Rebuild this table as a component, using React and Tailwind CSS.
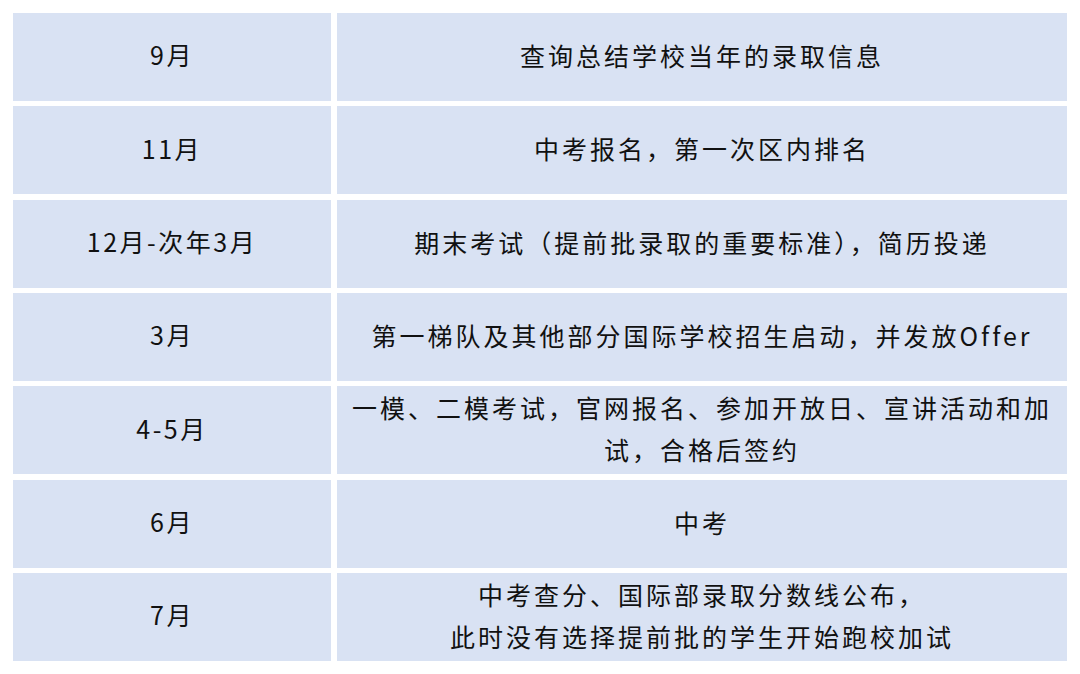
import React from 'react';

const rows = [
  { month: '9月', lines: ['查询总结学校当年的录取信息'] },
  { month: '11月', lines: ['中考报名，第一次区内排名'] },
  { month: '12月-次年3月', lines: ['期末考试（提前批录取的重要标准），简历投递'] },
  { month: '3月', lines: ['第一梯队及其他部分国际学校招生启动，并发放Offer'] },
  { month: '4-5月', lines: ['一模、二模考试，官网报名、参加开放日、宣讲活动和加', '试，合格后签约'] },
  { month: '6月', lines: ['中考'] },
  { month: '7月', lines: ['中考查分、国际部录取分数线公布，', '此时没有选择提前批的学生开始跑校加试'] },
];

export default function App() {
  return (
    <div
      className="w-[1080px] h-[674px] bg-white pt-[13px] pl-[13px] text-[#111]"
      style={{ fontFamily: '"Noto Sans CJK SC", "Noto Sans", sans-serif' }}
    >
      <div className="grid grid-cols-[318px_730px] gap-x-[6px] gap-y-[5.33px]">
        {rows.map(row => (
          <React.Fragment key={row.month}>
            <div className="h-[88px] pb-[4px] bg-[#d9e2f3] flex items-center justify-center text-[25px] tracking-[2.5px]">
              {row.month}
            </div>
            <div className="h-[88px] pb-[4px] bg-[#d9e2f3] flex flex-col items-center justify-center text-[25px] tracking-[3px] leading-[42px]">
              {row.lines.map(line => (
                <span key={line} className="whitespace-nowrap">{line}</span>
              ))}
            </div>
          </React.Fragment>
        ))}
      </div>
    </div>
  );
}
